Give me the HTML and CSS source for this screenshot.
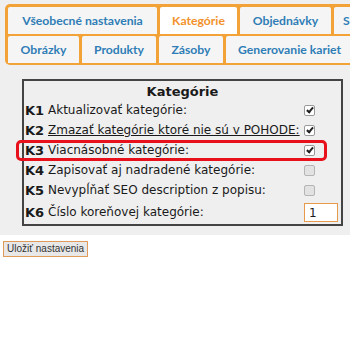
FILE: index.html
```html
<!DOCTYPE html>
<html lang="sk">
<head>
    <meta charset="UTF-8">
    <title>Nastavenia</title>
    <link rel="stylesheet" href="styles.css">
</head>
<body>
    <div class="panel">
        <div class="tabs">
            <div class="tab-row">
                <div class="tab w1">Všeobecné nastavenia</div>
                <div class="tab w2 active">Kategórie</div>
                <div class="tab w3">Objednávky</div>
                <div class="tab w4">S</div>
            </div>
            <div class="tab-row">
                <div class="tab w5">Obrázky</div>
                <div class="tab w6">Produkty</div>
                <div class="tab w7">Zásoby</div>
                <div class="tab w8">Generovanie kariet</div>
            </div>
        </div>

        <div class="box">
            <table class="settings">
                <colgroup><col class="c-key"><col><col class="c-val"></colgroup>
                <tr><th colspan="3">Kategórie</th></tr>
                <tr><td class="key">K1</td><td class="txt">Aktualizovať kategórie:</td><td><span class="cb on"></span></td></tr>
                <tr><td class="key">K2</td><td class="txt"><span class="uline">Zmazať kategórie ktoré nie sú v POHODE:</span></td><td><span class="cb on"></span></td></tr>
                <tr><td class="key">K3</td><td class="txt">Viacnásobné kategórie:</td><td><span class="cb on"></span></td></tr>
                <tr><td class="key">K4</td><td class="txt">Zapisovať aj nadradené kategórie:</td><td><span class="cb"></span></td></tr>
                <tr><td class="key">K5</td><td class="txt">Nevypĺňať SEO description z popisu:</td><td><span class="cb"></span></td></tr>
                <tr class="last"><td class="key">K6</td><td class="txt">Číslo koreňovej kategórie:</td><td><span class="num">1</span></td></tr>
            </table>
            <div class="mark"></div>
        </div>
    </div>
    <button class="save">Uložiť nastavenia</button>
</body>
</html>
```

FILE: styles.css
```css
body { margin: 0; width: 350px; overflow: hidden; background: #fff; font-family: "DejaVu Sans", Verdana, sans-serif; }
.panel { background: #efefef; padding: 4px 0 9px 5px; overflow: hidden; }

.tabs { width: 420px; background: #f2a236; border-radius: 5px; padding: 3px 0 2px 3px; display: flex; flex-direction: column; gap: 2px; }
.tab-row { display: flex; gap: 3px; }
.tab { flex: none; box-sizing: border-box; height: 27px; background: #f5f5f5; color: #2f7db6; font-family: Lato, sans-serif; font-weight: 700; font-size: 12.2px; display: flex; align-items: center; justify-content: center; border-radius: 2px 2px 0 0; }
.tab.active { background: #fff; color: #f2922c; }
.w1 { width: 149px; }
.w2 { width: 77px; }
.w3 { width: 91px; }
.w4 { width: 90px; justify-content: flex-start; padding-left: 9px; }
.w5 { width: 71px; }
.w6 { width: 74px; }
.w7 { width: 64px; }
.w8 { width: 200px; justify-content: flex-start; padding-left: 12px; }

.box { position: relative; margin: 14px 0 0 17px; width: 321px; }
.settings { width: 100%; table-layout: fixed; border: 2px solid #444; border-collapse: collapse; font-size: 12px; color: #1a1a1a; }
.c-key { width: 21px; }
.c-val { width: 38px; }
.settings th { font-size: 13px; font-weight: 700; height: 18px; padding: 1px 0 0; text-align: center; }
.settings td { height: 20px; padding: 0; white-space: nowrap; }
.settings td.key { padding-left: 1px; font-weight: 700; font-size: 13px; }
.settings td.txt { padding-left: 4px; }
.settings .last td { height: 24px; }
.uline { text-decoration: underline; }

.cb { display: inline-block; width: 9px; height: 9px; border: 1px solid #b5b5b5; border-radius: 2px; background: #e2e2e2; vertical-align: middle; }
.cb.on { background: #fff; border-color: #999; position: relative; }
.cb.on::after { content: ""; position: absolute; left: 3px; top: 0px; width: 2px; height: 5px; border: solid #222; border-width: 0 2px 2px 0; transform: rotate(40deg); }
.num { display: inline-block; box-sizing: border-box; width: 34px; height: 19px; border: 1px solid #e89a4c; background: #fff; font-size: 12px; padding: 2px 0 0 4px; vertical-align: middle; }

.mark { position: absolute; left: -6px; top: 61px; width: 305px; height: 15px; border: 3px solid #e8101a; border-radius: 5px; }

.save { margin: 6px 0 0 3px; font-family: "Liberation Sans", Arial, sans-serif; font-size: 10px; color: #333; background: #e8e8e8; border: 1px solid #e09a5a; padding: 1px 3px 2px; border-radius: 0; }
```
